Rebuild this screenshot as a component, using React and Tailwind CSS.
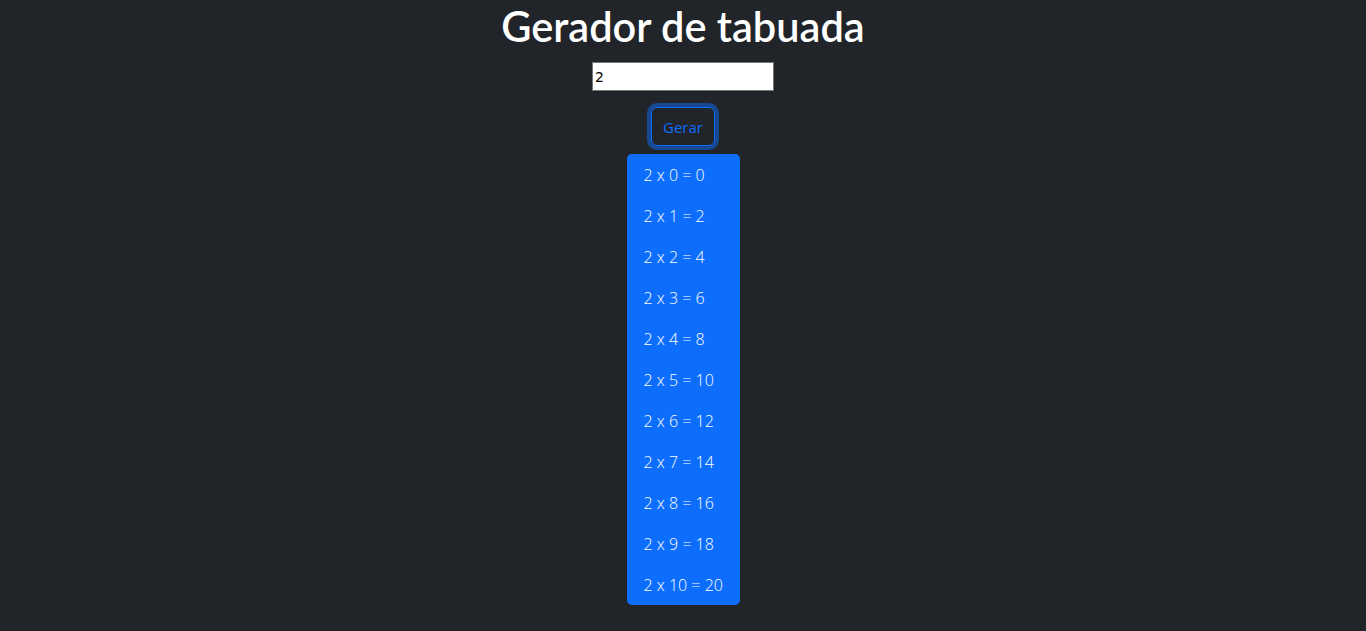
import { useState } from 'react';

export default function App() {
  const [num, setNum] = useState('2');
  const n = parseInt(num) || 0;
  const rows = Array.from({ length: 11 }, (_, i) => i);

  return (
    <div className="min-h-screen bg-[#212529] text-white flex flex-col items-center" style={{ fontFamily: '"Open Sans", sans-serif' }}>
      {/* Title */}
      <h1 className="text-[41.5px] font-semibold leading-[50px] mt-[1px]" style={{ fontFamily: 'Lato, sans-serif' }}>
        Gerador de tabuada
      </h1>

      <input
        type="number"
        value={num}
        onChange={e => setNum(e.target.value)}
        className="mt-[11px] w-[182px] h-[29px] bg-white text-black text-[14px] px-[2px] border border-[#767676] outline-none [appearance:textfield]"
        style={{ fontFamily: '"DejaVu Sans", sans-serif' }}
      />

      <button
        type="button"
        className="mt-[16px] w-[64px] h-[39px] pt-[2px] rounded-[6px] border border-[#0d6efd] text-[#0d6efd] text-[15px] ring-4 ring-[#0d6efd]/50"
      >
        Gerar
      </button>

      {/* Table */}
      <ul className="mt-[8px] w-[113px] bg-[#0d6efd] rounded-[5px] overflow-hidden">
        {rows.map(i => (
          <li key={i} className="h-[41px] pl-[17px] pt-[1px] flex items-center text-[16px] font-light text-white whitespace-nowrap">
            {n} x {i} = {n * i}
          </li>
        ))}
      </ul>
    </div>
  );
}
